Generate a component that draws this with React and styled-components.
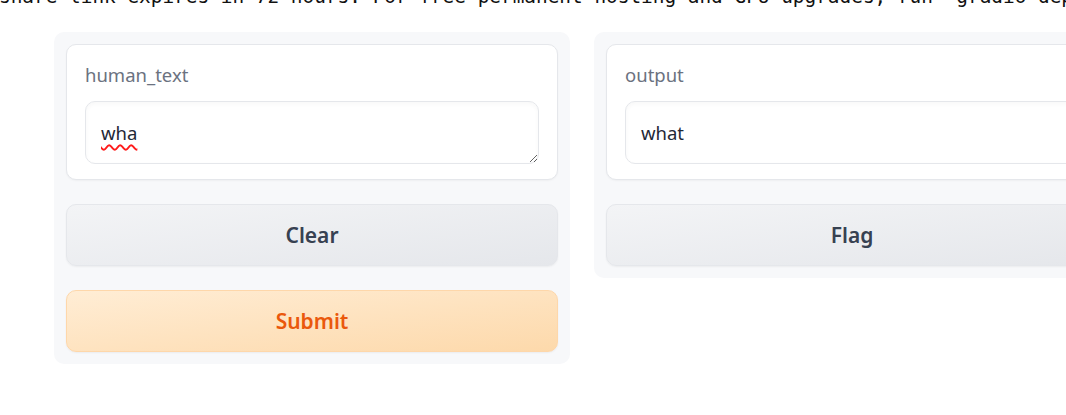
import React from 'react';
import styled, { createGlobalStyle } from 'styled-components';

const GlobalStyle = createGlobalStyle`
  html, body {
    margin: 0;
    padding: 0;
    background: #ffffff;
    overflow: hidden;
  }
  body {
    width: 1066px;
    height: 415px;
  }
`;

const Page = styled.div`
  width: 1066px;
  height: 415px;
  overflow: hidden;
  font-family: 'Noto Sans', 'Open Sans', sans-serif;
`;

const Notice = styled.div`
  margin: -15px 0 0 -1px;
  height: 24px;
  line-height: 24px;
  font-family: 'DejaVu Sans Mono', 'Liberation Mono', monospace;
  font-size: 19.4px;
  color: #111111;
  white-space: nowrap;
`;

const Columns = styled.div`
  display: flex;
  align-items: flex-start;
  gap: 24px;
  margin: 23px 0 0 54px;
  width: 1056px;
`;

const Panel = styled.div`
  flex: 0 0 516px;
  display: flex;
  flex-direction: column;
  gap: 24px;
  padding: 12px;
  box-sizing: border-box;
  background: #f7f8fa;
  border-radius: 10px;
`;

const Card = styled.div`
  background: #ffffff;
  border: 1px solid #e5e7eb;
  border-radius: 10px;
  box-shadow: 0 1px 2px rgba(0, 0, 0, 0.04);
  padding: 19px 18px 15px 18px;
  display: flex;
  flex-direction: column;
  gap: 15px;
`;

const Label = styled.span`
  font-size: 18.5px;
  line-height: 22px;
  color: #6b7280;
`;

const TextBox = styled.div`
  height: 63px;
  box-sizing: border-box;
  border: 1px solid #e5e7eb;
  border-radius: 10px;
  padding: 0 15px;
  display: flex;
  align-items: center;
  font-size: 18.5px;
  color: #1f2937;
  background: #ffffff;
  box-shadow: inset 0 2px 4px rgba(0, 0, 0, 0.03);
  resize: vertical;
  overflow: hidden;
`;

const Misspelled = styled.span`
  text-decoration: underline wavy #ff1a1a;
  text-decoration-thickness: 1.5px;
  text-underline-offset: 4px;
`;

const Button = styled.button`
  height: 62px;
  width: 100%;
  border-radius: 10px;
  font-family: 'Noto Sans', 'Open Sans', sans-serif;
  font-size: 21px;
  font-weight: 600;
  cursor: pointer;
  box-shadow: 0 1px 2px rgba(0, 0, 0, 0.05);
  border: 1px solid ${({ $primary }) => ($primary ? '#fed7aa' : '#e5e7eb')};
  color: ${({ $primary }) => ($primary ? '#ea580c' : '#374151')};
  background: ${({ $primary }) =>
    $primary
      ? 'linear-gradient(to bottom right, #ffedd5, #fdd9ab)'
      : 'linear-gradient(to bottom right, #f3f4f6, #e5e7eb)'};
`;

const App = () => (
  <Page>
    <GlobalStyle />
    <Notice>
      share link expires in 72 hours. For free permanent hosting and GPU upgrades, run `gradio deploy` from Terminal to deploy to Spaces (https://huggingface.co/spaces)
    </Notice>
    <Columns>
      <Panel>
        <Card>
          <Label>human_text</Label>
          <TextBox>
            <Misspelled>wha</Misspelled>
          </TextBox>
        </Card>
        <Button>Clear</Button>
        <Button $primary>Submit</Button>
      </Panel>
      <Panel>
        <Card>
          <Label>output</Label>
          <TextBox>what</TextBox>
        </Card>
        <Button>Flag</Button>
      </Panel>
    </Columns>
  </Page>
);

export default App;
